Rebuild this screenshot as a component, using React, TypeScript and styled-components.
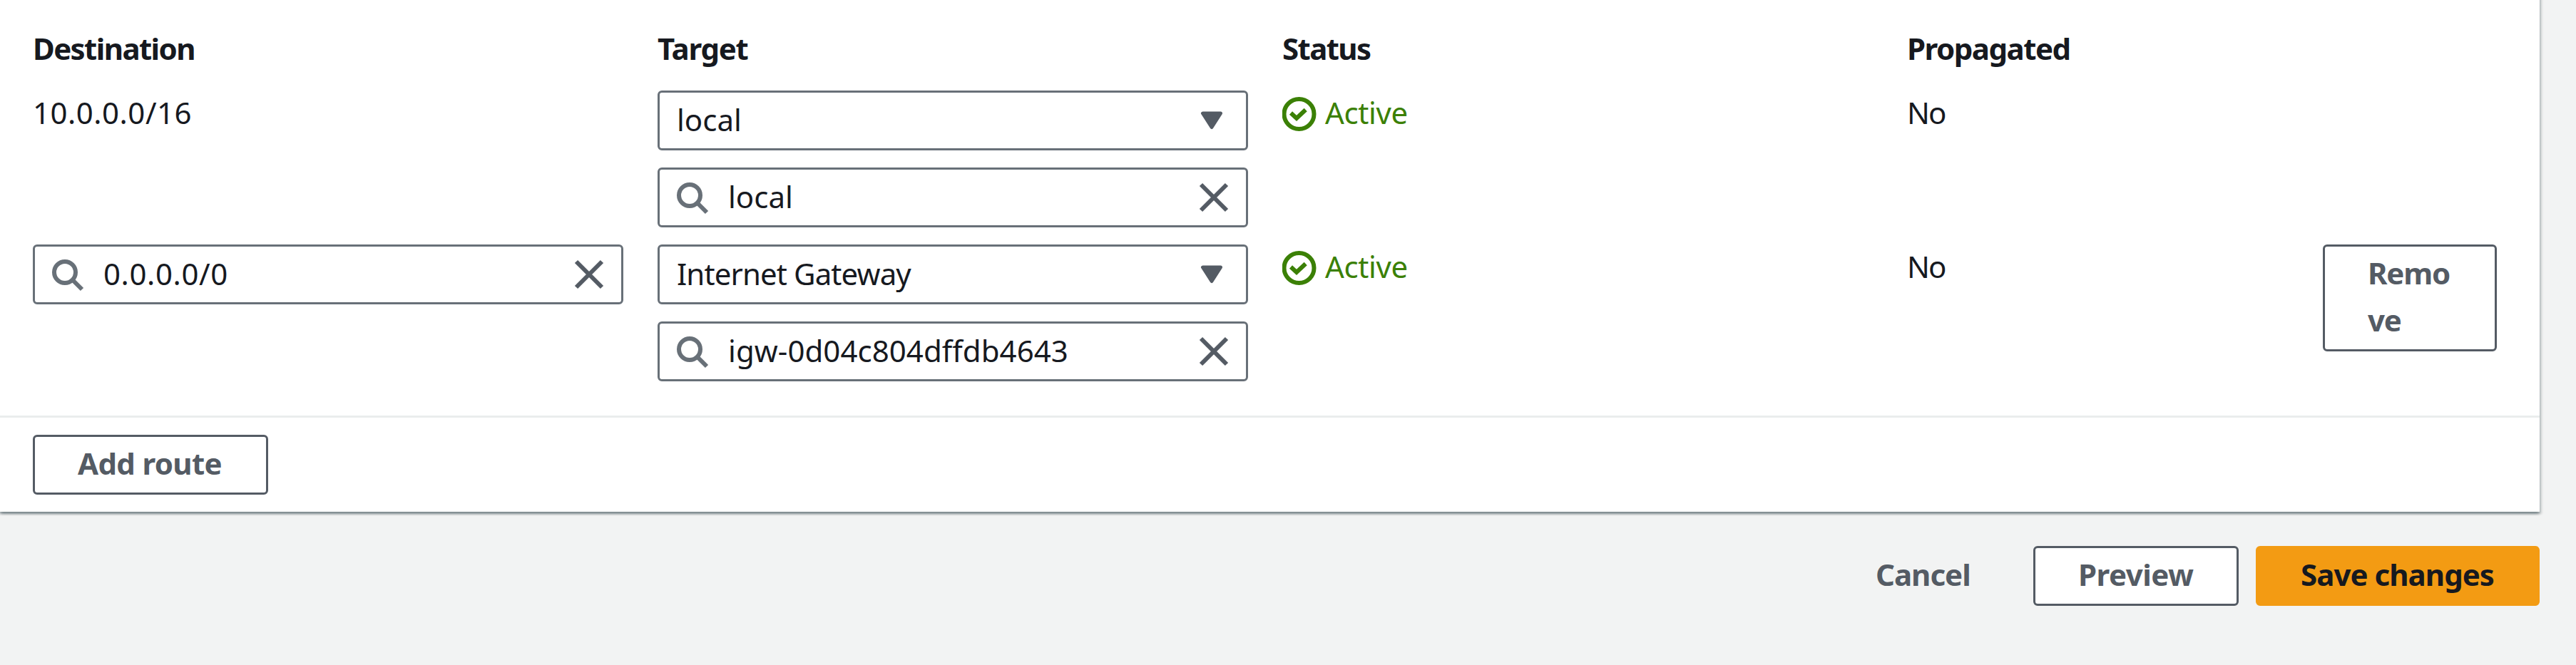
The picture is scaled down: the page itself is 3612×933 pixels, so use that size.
import React from 'react';
import styled, { createGlobalStyle } from 'styled-components';

const GlobalStyle = createGlobalStyle`
  *, *::before, *::after { box-sizing: border-box; }
  body {
    margin: 0;
    background: #f2f3f3;
    color: #16191f;
    font-family: 'Noto Sans', 'Open Sans', sans-serif;
    font-size: 42px;
    line-height: 66px;
  }
`;

const Page = styled.main`
  display: flow-root;
  width: 3612px;
  height: 933px;
  overflow: hidden;
`;

const Panel = styled.section`
  width: 3561px;
  height: 730px;
  margin-top: -12px;
  padding-top: 12px;
  background: #fff;
  box-shadow: 0 3px 3px 0 rgba(0, 28, 36, 0.3), 3px 3px 3px 0 rgba(0, 28, 36, 0.15),
    -3px 3px 3px 0 rgba(0, 28, 36, 0.15);
`;

const RouteGrid = styled.div`
  display: grid;
  grid-template-columns: 828px 828px 828px 535px 244px;
  grid-template-rows: 68px 192px 192px;
  column-gap: 48px;
  row-gap: 24px;
  align-items: start;
  height: 583px;
  padding: 35px 0 0 46px;
`;

const Text = styled.span<{ $spacing?: number }>`
  display: block;
  margin-top: -2px;
  white-space: nowrap;
  letter-spacing: ${(p) => p.$spacing ?? 0}px;
`;

const HeaderText = styled(Text)`
  margin-top: 0;
  font-weight: 700;
`;

const Stack = styled.div`
  display: grid;
  gap: 24px;
`;

const Field = styled.div<{ $select?: boolean }>`
  display: flex;
  align-items: center;
  gap: 26px;
  height: 84px;
  padding: 0 ${(p) => (p.$select ? 32 : 21)}px 0 ${(p) => (p.$select ? 24 : 22)}px;
  border: 3px solid #687078;
  border-radius: 6px;
  background: #fff;

  ${Text} {
    flex: 1;
    margin-top: -3px;
  }
`;

const Icon = styled.svg<{ $size: number }>`
  flex: none;
  width: ${(p) => p.$size}px;
  height: ${(p) => p.$size}px;
  fill: none;
`;

const Status = styled.div`
  display: flex;
  align-items: flex-start;
  gap: 12px;
  color: #3b8006;

  ${Icon} { margin-top: 9px; }
`;

const Button = styled.button<{ $variant?: 'primary' | 'link'; $width: number; $spacing: number }>`
  width: ${(p) => p.$width}px;
  padding: 4px 0 8px 60px;
  border: 3px solid
    ${(p) => (p.$variant === 'primary' ? '#f39b13' : p.$variant === 'link' ? 'transparent' : '#545b64')};
  border-radius: 6px;
  background: ${(p) => (p.$variant === 'primary' ? '#f39b13' : p.$variant === 'link' ? 'transparent' : '#fff')};
  color: ${(p) => (p.$variant === 'primary' ? '#16191f' : '#545b64')};
  font: inherit;
  font-weight: 700;
  letter-spacing: ${(p) => p.$spacing}px;
  text-align: left;
  white-space: nowrap;
`;

const Footer = styled.div`
  display: flex;
  align-items: flex-start;
  padding: 24px 0 0 46px;
  border-top: 3px solid #eaeded;
`;

const Actions = styled.div`
  display: flex;
  justify-content: flex-end;
  gap: 24px;
  width: 3561px;
  padding-top: 48px;
`;

const SearchIcon = () => (
  <Icon $size={48} viewBox="0 0 48 48" stroke="#687078" strokeWidth="6">
    <circle cx="20" cy="21" r="15" />
    <path d="M30.500 31.500l13.500 13.500" />
  </Icon>
);

const CloseIcon = () => (
  <Icon $size={48} viewBox="0 0 48 48" stroke="#545b64" strokeWidth="6">
    <path d="M6 6l36 36M42 6L6 42" />
  </Icon>
);

const CaretIcon = () => (
  <Icon $size={32} viewBox="0 0 32 32">
    <path
      d="M3.500 6h25L16 25.500z"
      fill="#545b64"
      stroke="#545b64"
      strokeWidth="5"
      strokeLinejoin="round"
    />
  </Icon>
);

const CheckIcon = () => (
  <Icon $size={48} viewBox="0 0 48 48" stroke="#3b8006">
    <circle cx="23.500" cy="24" r="21" strokeWidth="6" />
    <path d="M12 22.500l8 7.500 12.700-12" strokeWidth="6" />
  </Icon>
);

const SelectField = ({ value, spacing }: { value: string; spacing?: number }) => (
  <Field $select>
    <Text $spacing={spacing}>{value}</Text>
    <CaretIcon />
  </Field>
);

const SearchField = ({ value, spacing }: { value: string; spacing?: number }) => (
  <Field>
    <SearchIcon />
    <Text $spacing={spacing}>{value}</Text>
    <CloseIcon />
  </Field>
);

const ActiveStatus = () => (
  <Status>
    <CheckIcon />
    <Text $spacing={-0.35}>Active</Text>
  </Status>
);

export default function App() {
  return (
    <Page>
      <GlobalStyle />
      <Panel>
        <RouteGrid>
          <HeaderText $spacing={-1.6}>Destination</HeaderText>
          <HeaderText $spacing={-1.3}>Target</HeaderText>
          <HeaderText $spacing={-1.6}>Status</HeaderText>
          <HeaderText $spacing={-1.5}>Propagated</HeaderText>
          <span />

          <Text $spacing={0.5}>10.0.0.0/16</Text>
          <Stack>
            <SelectField value="local" />
            <SearchField value="local" />
          </Stack>
          <ActiveStatus />
          <Text $spacing={-2}>No</Text>
          <span />

          <SearchField value="0.0.0.0/0" spacing={0.6} />
          <Stack>
            <SelectField value="Internet Gateway" spacing={-0.9} />
            <SearchField value="igw-0d04c804dffdb4643" spacing={0.05} />
          </Stack>
          <ActiveStatus />
          <Text $spacing={-2}>No</Text>
          <Button $width={244} $spacing={-1.2}>
            Remo
            <br />
            ve
          </Button>
        </RouteGrid>
        <Footer>
          <Button $width={330} $spacing={-0.65}>Add route</Button>
        </Footer>
      </Panel>
      <Actions>
        <Button $variant="link" $width={260} $spacing={-1}>Cancel</Button>
        <Button $width={288} $spacing={-0.5}>Preview</Button>
        <Button $variant="primary" $width={398} $spacing={-0.95}>Save changes</Button>
      </Actions>
    </Page>
  );
}
